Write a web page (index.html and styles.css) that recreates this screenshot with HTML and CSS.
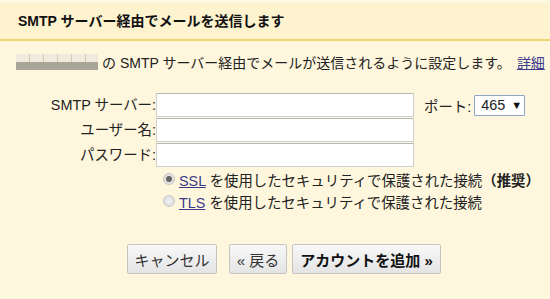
FILE: index.html
```html
<!DOCTYPE html>
<html lang="ja">
<head>
    <meta charset="UTF-8">
    <title>SMTP サーバー経由でメールを送信します</title>
    <link rel="stylesheet" href="styles.css">
</head>
<body>
    <div class="header">
        <h1>SMTP サーバー経由でメールを送信します</h1>
    </div>

    <p class="intro">
        <span class="masked"></span>
        <span>の SMTP サーバー経由でメールが送信されるように設定します。</span>
        <a href="#">詳細</a>
    </p>

    <div class="form">
        <label class="label">SMTP サーバー:</label>
        <input type="text" class="field">
        <div class="port">
            <span>ポート:</span>
            <div class="select">465 <span class="arrow">▼</span></div>
        </div>

        <label class="label">ユーザー名:</label>
        <input type="text" class="field">
        <div></div>

        <label class="label">パスワード:</label>
        <input type="password" class="field">
        <div></div>

        <div class="options">
            <label class="option">
                <input type="radio" name="sec" class="radio" checked>
                <span><a href="#">SSL</a> を使用したセキュリティで保護された接続<b>（推奨）</b></span>
            </label>
            <label class="option">
                <input type="radio" name="sec" class="radio">
                <span><a href="#">TLS</a> を使用したセキュリティで保護された接続</span>
            </label>
        </div>
    </div>

    <div class="buttons">
        <button class="btn cancel">キャンセル</button>
        <button class="btn back">« 戻る</button>
        <button class="btn primary">アカウントを追加 »</button>
    </div>
</body>
</html>
```

FILE: styles.css
```css
* {
    margin: 0;
    padding: 0;
    box-sizing: border-box;
}
body {
    background-color: #fef7dd;
    color: #222;
    font-family: "Liberation Sans", "Noto Sans CJK JP", sans-serif;
    font-size: 14px;
    width: 550px;
    height: 299px;
    overflow: hidden;
}
.header {
    background-color: #fdf3cf;
    border-top: 3px solid #fff8e0;
    border-bottom: 2px solid #efd470;
    height: 41px;
    padding: 8px 18px 0;
}
.header h1 {
    font-size: 14px;
    font-weight: bold;
    color: #111;
    line-height: 20px;
}
.intro {
    display: flex;
    align-items: center;
    height: 20px;
    margin-top: 11px;
    padding-left: 16px;
    white-space: nowrap;
}
.intro a {
    color: #3b3b8c;
    margin-left: 6px;
}
.masked {
    width: 82px;
    height: 16px;
    margin-right: 4px;
    background:
        repeating-linear-gradient(90deg, transparent 0 13px, #cfc9b8 13px 14px) top / 100% 8px no-repeat,
        linear-gradient(#efeadb 0 50%, #a9a599 50% 100%);
}
.form {
    display: grid;
    grid-template-columns: 156px 258px auto;
    row-gap: 1px;
    margin-top: 21px;
    font-size: 14.4px;
}
.label {
    text-align: right;
    align-self: center;
    line-height: 20px;
}
.field {
    height: 24px;
    border: 1px solid #cfcfcf;
    border-top-color: #b8b8b8;
    background-color: #fff;
    outline: none;
    font: inherit;
}
.port {
    display: flex;
    align-items: center;
    gap: 3px;
    padding-left: 10px;
    align-self: center;
}
.select {
    height: 21px;
    width: 51px;
    border: 1px solid #8ea4c8;
    background-color: #fff;
    padding-left: 6px;
    line-height: 19px;
    border-radius: 1px;
}
.arrow {
    font-size: 11px;
    vertical-align: 1px;
    margin-left: 2px;
    color: #111;
}
.options {
    grid-column: 2 / 4;
    padding-left: 7px;
}
.option {
    display: flex;
    align-items: center;
    height: 22px;
    white-space: nowrap;
}
.option a {
    color: #3b3b8c;
}
.option b {
    font-weight: bold;
}
.radio {
    appearance: none;
    width: 12px;
    height: 12px;
    border-radius: 50%;
    border: 1px solid #c8c8c8;
    background: radial-gradient(#f2f2f2, #d6d6d6);
    margin-right: 4px;
    position: relative;
}
.radio:checked::after {
    content: "";
    position: absolute;
    left: 2px;
    top: 2px;
    width: 6px;
    height: 6px;
    border-radius: 50%;
    background-color: #666;
}
.buttons {
    display: flex;
    padding-left: 127px;
    margin-top: 32px;
}
.btn {
    height: 30px;
    border: 1px solid #c4c4c4;
    border-radius: 2px;
    background: linear-gradient(#f8f8f8, #e4e4e4);
    font-family: inherit;
    font-size: 15px;
    color: #333;
    padding: 0;
    white-space: nowrap;
}
.cancel {
    width: 90px;
}
.back {
    width: 58px;
    margin-left: 12px;
}
.primary {
    width: 149px;
    margin-left: 5px;
    font-weight: bold;
    color: #111;
}
```
